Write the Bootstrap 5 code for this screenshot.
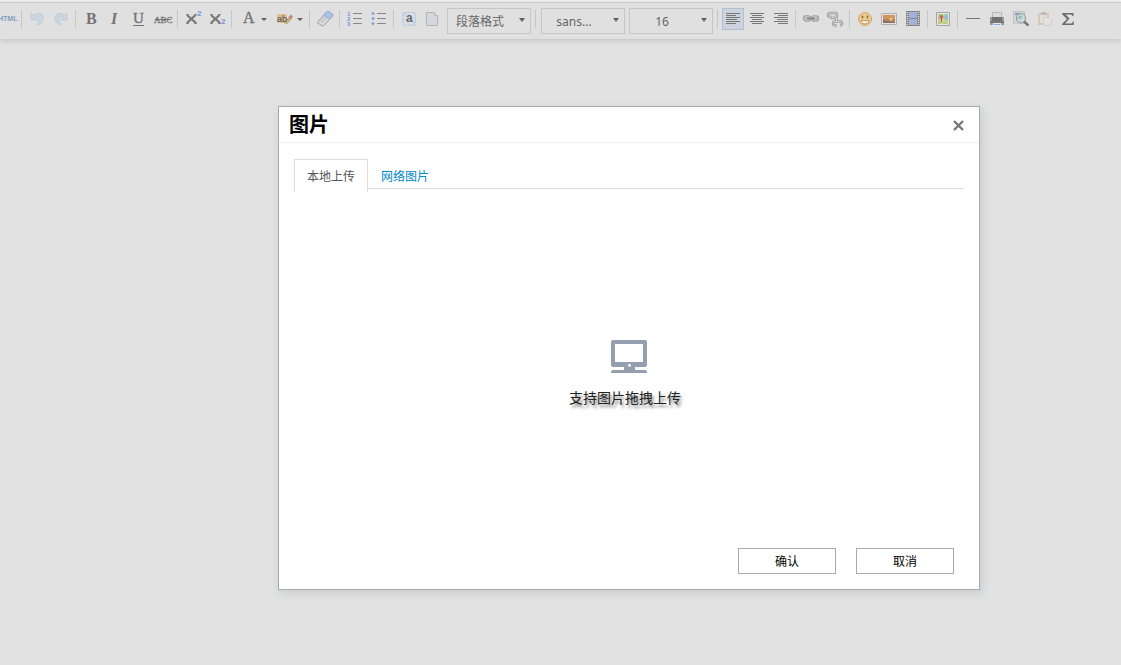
<!DOCTYPE html>
<html lang="zh-CN">
<head>
<meta charset="utf-8">
<meta name="viewport" content="width=device-width, initial-scale=1">
<title>图片</title>
<link href="https://cdn.jsdelivr.net/npm/bootstrap@5.3.0/dist/css/bootstrap.min.css" rel="stylesheet">
<style>
body{background:#e2e2e2;font-family:"Noto Sans","Noto Sans CJK SC",sans-serif;font-size:12px;line-height:18px;color:#000}
.editor-bar{background:#e0e0e0;border-top:1px solid #ccc;margin-top:2px;padding:5px 0;height:37px;box-shadow:0 1px 6px rgba(0,0,0,.16), 0 -2px 0 #f4f4f4}
.tools{margin-left:-5px}
.tool{width:22px;height:22px;margin:0 1px;padding:0;border:1px solid transparent;background:none;flex:none;display:flex;align-items:center;justify-content:center}
.tool svg{width:20px;height:20px;flex:none;overflow:visible}
.tool.wide{width:34px}
.tool.wide svg{width:32px}
.tool.on{background:#cbd3dc;border-color:#aebfd8}
.tool text{font-family:"Liberation Serif",serif;font-weight:700;fill:#747474}
.tool text.sans{font-family:"Liberation Sans",sans-serif}
.rule{width:1px;height:18px;margin:2px 3px 0 2px;background:#c6c6c6;flex:none}
.pick{width:84px;height:26px;margin:0 2px;flex:none}
.pick select{width:100%;height:26px;border:1px solid #c6c6c6;border-radius:0;background:transparent;appearance:none;font-size:12px;color:#666;text-align:center;text-align-last:center;padding:2px 18px 0 0}
.pick::after{content:"";position:absolute;right:6px;top:10px;border:3px solid transparent;border-top:4px solid #606060;border-bottom:0;pointer-events:none}
.stage{padding:67px 0 75px 137px}
.dialog{width:702px;max-width:100%;background:#fff;border:1px solid #aaa;box-shadow:2px 3px 8px rgba(130,140,155,.28)}
.dialog-head{height:36px;padding:0 14px 0 10px;border-bottom:1px solid #eee}
.dialog-head h1{font-size:20px;line-height:36px;font-weight:700;margin:0}
.shut{border:0;background:none;padding:0;width:13px;height:14px;display:flex}
.tabs{margin:16px 15px 0;height:33px}
.tabs::after{content:"";flex:1;height:30px;border-bottom:1px solid #ddd}
.tabs a{font-size:12px;line-height:18px;padding:9px 12px 0 13px;text-decoration:none;color:#0088cc;border-bottom:1px solid #ddd;height:30px}
.tabs a.active{color:#555;border:1px solid #ddd;border-bottom:0;height:33px;padding:8px 12px 0}
.drop{height:356px;padding:148px 8px 0 0}
.drop p{font-size:14px;line-height:20px;margin:15px 0 0;color:#222;text-shadow:2px 3px 3px rgba(0,0,0,.5)}
.foot{gap:20px;padding:0 25px 15px}
.foot button{width:98px;height:26px;border:1px solid #aaa;border-radius:0;background:#fff;font-size:12px;line-height:18px;padding:2px 0 0;color:#000}
</style>
</head>
<body>
<header class="editor-bar">
<div class="tools d-flex flex-nowrap align-items-start">
<button class="tool" aria-label="HTML"><svg viewBox="0 0 20 20"><text x="1" y="12" class="sans" style="font-size:7px;fill:#7f9fc0">HTML</text></svg></button>
<span class="rule"></span>
<button class="tool" aria-label="撤销"><svg viewBox="0 0 20 20"><path d="M4 4v7h7L8.300 8.200c3-2 5 .3 3.500 3.800L10 16c4-.5 6.500-4 6-8-.7-4-6-5-9.500-1.600z" fill="#c9d5df" stroke="#b9c9d7" stroke-width=".7"/></svg></button>
<button class="tool" aria-label="重做"><svg viewBox="0 0 20 20"><path d="M16 4v7H9l2.700-2.800c-3-2-5 .3-3.500 3.800L10 16c-4-.5-6.500-4-6-8 .7-4 6-5 9.500-1.600z" fill="#c9d5df" stroke="#b9c9d7" stroke-width=".7"/></svg></button>
<span class="rule"></span>
<button class="tool" aria-label="加粗"><svg viewBox="0 0 20 20"><text x="5" y="15" font-size="16">B</text></svg></button>
<button class="tool" aria-label="斜体"><svg viewBox="0 0 20 20"><text x="6" y="15" font-size="16" font-style="italic">I</text></svg></button>
<button class="tool" aria-label="下划线"><svg viewBox="0 0 20 20"><text x="4" y="14" font-size="15" style="font-weight:400" stroke="#747474" stroke-width=".4">U</text><path d="M4 16.500h11" stroke="#747474"/></svg></button>
<button class="tool" aria-label="删除线"><svg viewBox="0 0 20 20"><text x="1" y="14" style="font-size:9px;font-weight:400" stroke="#747474" stroke-width=".3">ABC</text><path d="M2 10.500h16" stroke="#747474"/></svg></button>
<span class="rule"></span>
<button class="tool" aria-label="上标"><svg viewBox="0 0 20 20"><path d="M4 6l9 8M12.500 6L4 14" stroke="#777" stroke-width="2.200"/><path d="M3 5.500h3M11 5.500h3M3 14.500h3M11 14.500h3" stroke="#888"/><text class="sans" x="14" y="7" style="font-size:8px;fill:#7795d5">2</text></svg></button>
<button class="tool" aria-label="下标"><svg viewBox="0 0 20 20"><path d="M4 6l9 8M12.500 6L4 14" stroke="#777" stroke-width="2.200"/><path d="M3 5.500h3M11 5.500h3M3 14.500h3M11 14.500h3" stroke="#888"/><text class="sans" x="14" y="15" style="font-size:8px;fill:#7795d5">2</text></svg></button>
<span class="rule"></span>
<button class="tool wide" aria-label="字体颜色"><svg viewBox="0 0 32 20"><text x="6" y="14" font-size="16" style="font-weight:400" stroke="#747474" stroke-width=".4">A</text><path d="M24 9h6l-3 3z" fill="#606060"/></svg></button>
<button class="tool wide" aria-label="背景色"><svg viewBox="0 0 32 20"><path fill="#e2c091" d="M4 5h10v9H4z"/><path d="M12 14.500l6-6" stroke="#98865b" stroke-width="3"/><path d="M12 14.500l6-6" stroke="#dfca80" stroke-width="1.500"/><path d="M16.500 9l2.500-2.500" stroke="#cf8282" stroke-width="3"/><text class="sans" x="4" y="13" style="font-size:9px;font-weight:400;fill:#555" stroke="#666" stroke-width=".2">ab</text><path d="M24 9h6l-3 3z" fill="#606060"/></svg></button>
<span class="rule"></span>
<button class="tool" aria-label="清除格式"><svg viewBox="0 0 20 20"><path d="M3 12.500L11.500 3q1-1 2-.5l4 2.500q.8.800 0 2L9 16.500q-1 .8-2 .2l-4-2.500q-.7-.7 0-1.700z" fill="#ccced2" stroke="#999" stroke-width=".8"/><path d="M9 6L11.500 3q1-1 2-.5l4 2.500q.8.800 0 2l-3 3.500z" fill="#a9c4e8" stroke="#83a4cf" stroke-width=".7"/><path d="M4 13l4 2.500 5.500-6" fill="none" stroke="#ecedf0" stroke-width="1"/></svg></button>
<span class="rule"></span>
<button class="tool" aria-label="有序列表"><svg viewBox="0 0 20 20"><path d="M8 4.500h9M8 9.500h9M8 14.500h9" stroke="#888"/><g style="font-size:6px"><text class="sans" x="2" y="7" style="fill:#7795d5">1</text><text class="sans" x="2" y="12" style="fill:#7795d5">2</text><text class="sans" x="2" y="17" style="fill:#7795d5">3</text></g></svg></button>
<button class="tool" aria-label="无序列表"><svg viewBox="0 0 20 20"><path d="M8 4.500h9M8 9.500h9M8 14.500h9" stroke="#888"/><g fill="#abc2f0" stroke="#7795d5"><circle cx="4" cy="4.500" r="1"/><circle cx="4" cy="9.500" r="1"/><circle cx="4" cy="14.500" r="1"/></g></svg></button>
<span class="rule"></span>
<button class="tool" aria-label="全选"><svg viewBox="0 0 20 20"><rect x="3.500" y="3.500" width="13" height="13" rx="2" fill="#d3dbe8" stroke="#b5c5de" stroke-dasharray="2 1"/><path d="M3 8l5-5M12 17l5-5M3 13l3-3M13 6l3-3" stroke="#b9c9e0"/><path d="M6 5h8v10H6z" fill="#dadde2"/><text class="sans" x="7" y="13" style="font-size:12px;fill:#666">a</text></svg></button>
<button class="tool" aria-label="清空文档"><svg viewBox="0 0 20 20"><path d="M3.500 3.500h8l3 3v10h-11z" fill="#d5d7de" stroke="#b4b4b4"/><path d="M11.500 3.500v3h3" fill="#eee" stroke="#b4b4b4"/></svg></button>
<div class="pick position-relative"><select aria-label="段落格式"><option>段落格式</option></select></div>
<span class="rule"></span>
<div class="pick position-relative"><select aria-label="字体"><option>sans...</option></select></div>
<div class="pick position-relative"><select aria-label="字号"><option>16</option></select></div>
<span class="rule"></span>
<button class="tool on" aria-label="左对齐"><svg viewBox="0 0 20 20"><path d="M3 4.500h14M3 6.500h10M3 8.500h14M3 10.500h11M3 12.500h14M3 14.500h10" stroke="#777"/></svg></button>
<button class="tool" aria-label="居中"><svg viewBox="0 0 20 20"><path d="M3 4.500h14M5 6.500h10M3 8.500h14M5 10.500h10M3 12.500h14M5 14.500h10" stroke="#777"/></svg></button>
<button class="tool" aria-label="右对齐"><svg viewBox="0 0 20 20"><path d="M3 4.500h14M7 6.500h10M3 8.500h14M6 10.500h11M3 12.500h14M7 14.500h10" stroke="#777"/></svg></button>
<span class="rule"></span>
<button class="tool" aria-label="链接"><svg viewBox="0 0 20 20"><g fill="none" stroke="#9a9a9a" stroke-width="2.400"><rect x="3" y="7.500" width="6" height="4" rx="2"/><rect x="11" y="7.500" width="6" height="4" rx="2"/></g><g fill="none" stroke="#cfcfcf" stroke-width=".8"><rect x="3" y="7.500" width="6" height="4" rx="2"/><rect x="11" y="7.500" width="6" height="4" rx="2"/></g><path d="M6 9.500h8" stroke="#858585" stroke-width="1.500"/></svg></button>
<button class="tool" aria-label="取消链接"><svg viewBox="0 0 20 20"><g fill="none" stroke="#969696" stroke-width="2.400"><path d="M7 8H5q-2-.5-2-2t2-2h5q2 .3 2 2t-2 2M12 16.500h-2q-2-.4-2-2t2-2h5q2 .3 2 2t-2 2M7.500 7v2h4v3.500"/></g><path d="M7 8H5q-2-.5-2-2t2-2h5q2 .3 2 2t-2 2M12 16.500h-2q-2-.4-2-2t2-2h5q2 .3 2 2t-2 2M7.500 7v2h4v3.500" fill="none" stroke="#dcdcdc" stroke-width=".9"/></svg></button>
<span class="rule"></span>
<button class="tool" aria-label="表情"><svg viewBox="0 0 20 20"><circle cx="10" cy="10" r="6.500" fill="#eacb8e" stroke="#d8a66f"/><ellipse cx="7.500" cy="8" rx=".9" ry="1.400" fill="#8b6c48"/><ellipse cx="12.500" cy="8" rx=".9" ry="1.400" fill="#8b6c48"/><path d="M6 11.500h8q-.5 3.500-4 3.500t-4-3.500z" fill="#f4eee2" stroke="#c08f60" stroke-width=".8"/></svg></button>
<button class="tool" aria-label="图片"><svg viewBox="0 0 20 20"><path d="M2.500 4.500h15v11h-15z" fill="#e3e3e3" stroke="#b0b0b0"/><path d="M4 6h12v8H4z" fill="#d29362"/><path d="M4 10h12v4H4z" fill="#b98261"/><path d="M4 14v-3l4 1 8 1v1z" fill="#8b7063"/><circle cx="12" cy="10" r="1.500" fill="#f0cd79"/></svg></button>
<button class="tool" aria-label="视频"><svg viewBox="0 0 20 20"><path d="M3 2h14v15H3z" fill="#858585"/><path d="M6 3h8v6H6zM6 10h8v6H6z" fill="#a3b2da"/><path d="M4.500 3v13M15.500 3v13" stroke="#e1e1e1" stroke-width="1.500" stroke-dasharray="1 1"/></svg></button>
<span class="rule"></span>
<button class="tool" aria-label="地图"><svg viewBox="0 0 20 20"><path d="M3.500 3.500h13v13h-13z" fill="#e5e5e5" stroke="#a5a5a5"/><path d="M5 5h10v10H5z" fill="#b2cb91"/><path d="M10 5h5v5l-3 1z" fill="#8dc1d5"/><path d="M5 12l5-2 5 4M11 5l-2 10" fill="none" stroke="#e5d589" stroke-width="1.500"/><path d="M8.500 13V8" stroke="#a25b4b"/><circle cx="8.500" cy="8" r="2" fill="#c96c5f"/></svg></button>
<span class="rule"></span>
<button class="tool" aria-label="分隔线"><svg viewBox="0 0 20 20"><path d="M3 9.500h14" stroke="#777"/></svg></button>
<button class="tool" aria-label="打印"><svg viewBox="0 0 20 20"><path d="M5.500 3.500h9v5h-9z" fill="#ddd" stroke="#b8b8b8"/><path d="M3 8h14v8H3z" fill="#999"/><path d="M5 8h10v4H5z" fill="#707070"/><path d="M3 12h14v2H3z" fill="#777"/><path d="M6 14h8v3H6z" fill="#e4e8ee"/><path d="M7 15.500h6" stroke="#85aaea"/></svg></button>
<button class="tool" aria-label="预览"><svg viewBox="0 0 20 20"><path d="M2.500 2.500h11v12h-11z" fill="#d3d5d8" stroke="#b5b9c0" stroke-width=".7"/><path d="M4 4h7v2H4z" fill="#7f9dc7"/><path d="M13 12.500l4.500 4" stroke="#777" stroke-width="2.500"/><circle cx="10" cy="9" r="4.500" fill="#cfdfe3" stroke="#999" stroke-width="1.200"/><path d="M8 10a3 3 0 013-3" fill="none" stroke="#76b0c9" stroke-width="1.500"/><path d="M9 11l3-3" stroke="#a7c48e"/></svg></button>
<button class="tool" aria-label="粘贴"><svg viewBox="0 0 20 20"><path d="M3 4h11v12H3z" fill="#dac6b9"/><path d="M5 6h7v8H5z" fill="#e1ddd9"/><path d="M6 3h5v3H6z" fill="#bdbdbd"/><path d="M8.500 8.500h6l2 2v6h-8z" fill="#e3e2e2" stroke="#d0cecd"/></svg></button>
<button class="tool" aria-label="公式"><svg viewBox="0 0 20 20"><path d="M3 4h11.500v3h-1q-.3-1.500-2-1.500H6.500l4 4-4.500 5h6q1.500 0 2-2h1L14.500 16H3v-1l5-5-5-5z" fill="#6c6c6c"/></svg></button>
</div>
</header>

<main class="stage d-flex justify-content-center">
<section class="dialog" role="dialog" aria-labelledby="dialogTitle">
<div class="dialog-head d-flex justify-content-between align-items-center">
<h1 id="dialogTitle">图片</h1>
<button class="shut" aria-label="关闭"><svg width="13" height="14" viewBox="0 0 13 14"><path d="M2 3l9 9M11 3l-9 9" stroke="#777" stroke-width="2.400"/></svg></button>
</div>
<nav class="tabs d-flex align-items-start">
<a class="active" href="#local">本地上传</a>
<a href="#remote">网络图片</a>
</nav>
<div class="drop d-flex flex-column align-items-center" id="local">
<svg class="ms-2" width="36" height="33" viewBox="0 0 36 33"><path fill="#949eb0" fill-rule="evenodd" d="M2 0h32q2 0 2 2v23q0 2-2 2H24v3h10q2 0 2 2v1H0v-1q0-2 2-2h11v-3H2q-2 0-2-2V2q0-2 2-2zm2 4v18h28V4zm14.500 19.800a1.500 1.500 0 100 3 1.500 1.500 0 000-3z"/></svg>
<p>支持图片拖拽上传</p>
</div>
<div class="foot d-flex justify-content-end">
<button>确认</button>
<button>取消</button>
</div>
</section>
</main>
<script src="https://cdn.jsdelivr.net/npm/bootstrap@5.3.0/dist/js/bootstrap.bundle.min.js"></script>
</body>
</html>
